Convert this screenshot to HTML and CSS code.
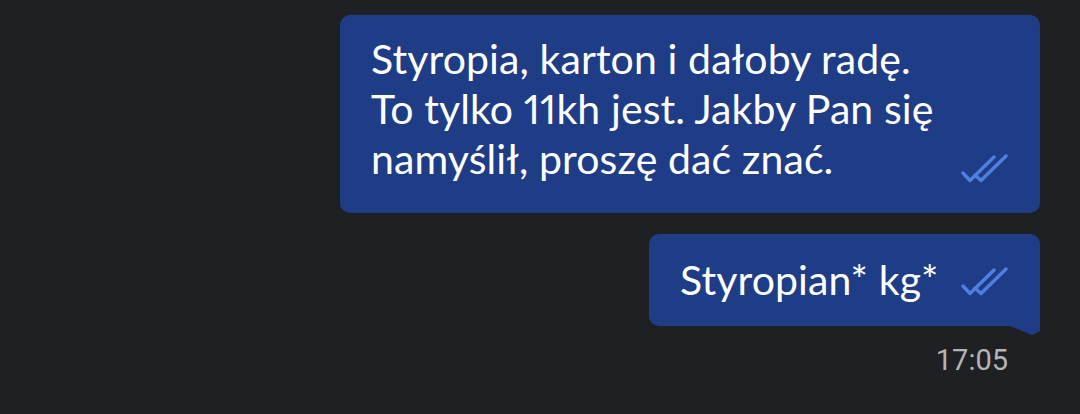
FILE: index.html
```html
<!DOCTYPE html>
<html lang="pl">
<head>
<meta charset="utf-8">
<link rel="stylesheet" href="styles.css">
</head>
<body>
<div class="chat">
  <div class="bubble bubble-long">
    <p class="text">Styropia, karton i dałoby radę.<br>To tylko 11kh jest. Jakby Pan się<br>namyślił, proszę dać znać.</p>
    <svg class="ticks" viewBox="0 0 48 31" width="48" height="31"><path d="M3 20 L10 27.5 L34 4 M15 22 L21 27.5 L46 3"/></svg>
  </div>
  <div class="bubble bubble-short">
    <p class="text">Styropian* kg*</p>
    <svg class="ticks" viewBox="0 0 48 31" width="48" height="31"><path d="M3 20 L10 27.5 L34 4 M15 22 L21 27.5 L46 3"/></svg>
    <span class="tail"></span>
  </div>
  <div class="time">17:05</div>
</div>
</body>
</html>
```
FILE: styles.css
```css
html, body {
  margin: 0;
  padding: 0;
  background: #1f2024;
  width: 1080px;
  height: 414px;
  overflow: hidden;
}
.chat {
  display: flex;
  flex-direction: column;
  align-items: flex-end;
  padding: 15px 40px 0 0;
  gap: 21px;
}
.bubble {
  position: relative;
  background: #1f3c86;
  border-radius: 10px;
  display: flex;
  box-sizing: border-box;
  justify-content: space-between;
}
.bubble-long {
  width: 700px;
  height: 198px;
  padding: 20px 32px 29px 31px;
  align-items: flex-end;
}
.bubble-short {
  width: 391px;
  height: 92px;
  padding: 21px 32px 21px 31px;
  align-items: center;
  border-bottom-right-radius: 0;
}
.text {
  margin: 0;
  font-family: Lato, "Noto Sans", sans-serif;
  font-size: 41px;
  line-height: 50px;
  letter-spacing: 0.1px;
  font-variant-numeric: proportional-nums;
  color: #ffffff;
  white-space: nowrap;
}
.ticks {
  flex: none;
}
.bubble-short .ticks {
  margin-top: 2px;
}
.ticks path {
  fill: none;
  stroke: #4f7fe3;
  stroke-width: 3.4;
  stroke-linecap: round;
  stroke-linejoin: round;
}
.tail {
  position: absolute;
  right: 0;
  bottom: -9px;
  width: 30px;
  height: 9px;
  background: #1f3c86;
  clip-path: polygon(0 0, 100% 0, 100% 55%, 75% 100%);
}
.time {
  margin-top: -4px;
  margin-right: 32px;
  font-family: Roboto, sans-serif;
  font-size: 29px;
  color: #b4b4b6;
}
```
